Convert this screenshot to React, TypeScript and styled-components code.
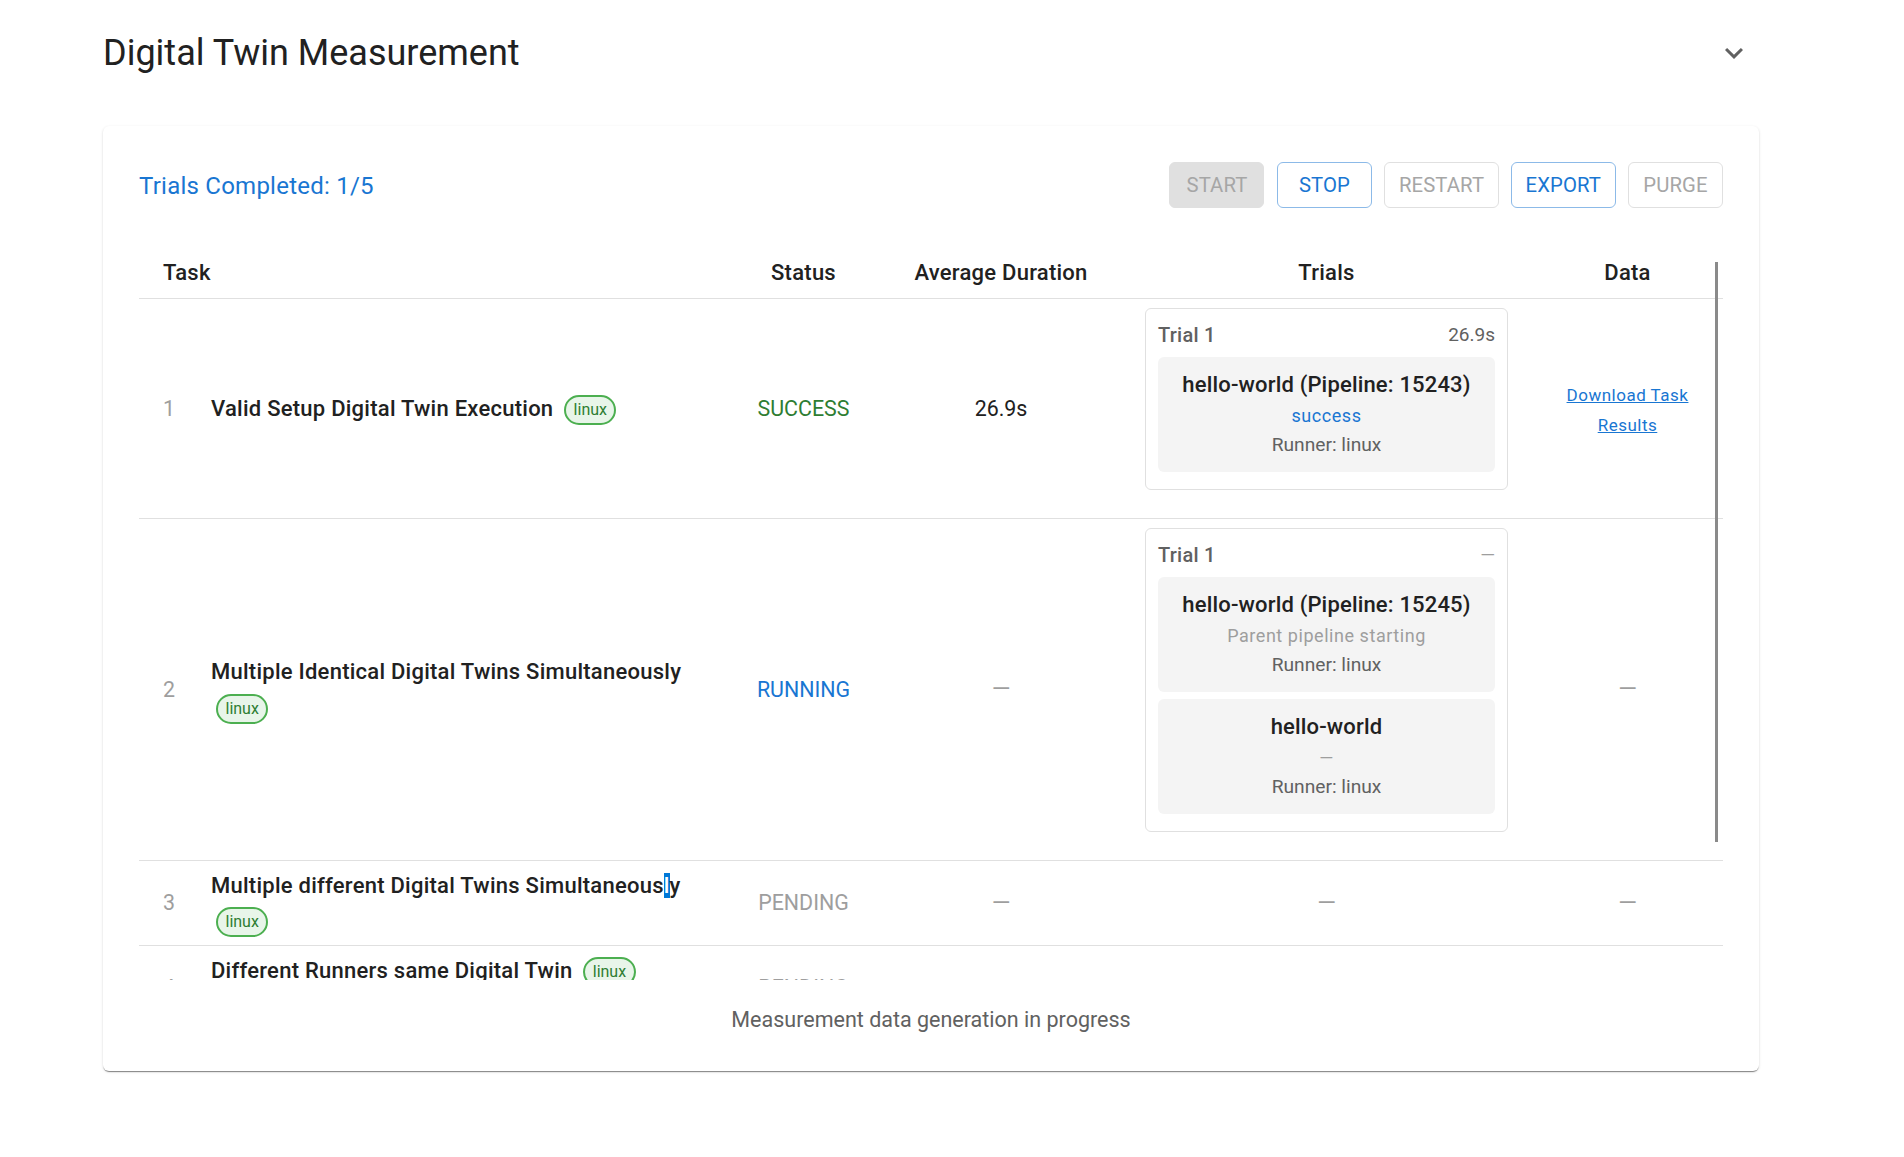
import React from "react";
import styled, { createGlobalStyle } from "styled-components";

const GlobalStyle = createGlobalStyle`
  html, body {
    margin: 0;
    padding: 0;
    background: #fff;
    font-family: Roboto, "Liberation Sans", sans-serif;
    color: rgba(0, 0, 0, 0.87);
  }
`;

const Page = styled.div`
  width: 1656px;
  padding: 33px 0 86px 103px;
`;

const Header = styled.div`
  display: flex;
  align-items: center;
  justify-content: space-between;
  height: 40px;
  padding-right: 7px;
  margin-bottom: 53px;
`;

const Title = styled.h2`
  margin: 0;
  font-size: 36px;
  font-weight: 400;
  line-height: 40px;
  color: #212121;
`;

const Chevron = styled.svg`
  width: 36px;
  height: 36px;
  fill: #616161;
`;

const Card = styled.div`
  background: #fff;
  border-radius: 6px;
  padding: 36px;
  box-shadow: 0 2px 1px -1px rgba(0, 0, 0, 0.34), 0 1px 1px 0 rgba(0, 0, 0, 0.14),
    0 1px 3px 0 rgba(0, 0, 0, 0.12);
`;

const Toolbar = styled.div`
  display: flex;
  align-items: center;
  justify-content: space-between;
  height: 46px;
  margin-bottom: 38px;
`;

const Completed = styled.div`
  padding-top: 2px;
  font-size: 24px;
  letter-spacing: 0.24px;
  color: #1976d2;
`;

const Buttons = styled.div`
  display: flex;
  gap: 12.5px;
`;

const Button = styled.button<{ $variant: "filled" | "active" | "off" }>`
  height: 46px;
  box-sizing: border-box;
  padding: 0 13.5px;
  min-width: 95px;
  border-radius: 6px;
  font-family: inherit;
  font-size: 20.3px;
  font-weight: 400;
  letter-spacing: 0.1px;
  text-transform: uppercase;
  background: ${(p) => (p.$variant === "filled" ? "#e0e0e0" : "#fff")};
  color: ${(p) => (p.$variant === "active" ? "#1976d2" : "#a6a6a6")};
  border: 1px solid
    ${(p) =>
      p.$variant === "filled"
        ? "#e0e0e0"
        : p.$variant === "active"
        ? "#8cbae8"
        : "#e0e0e0"};
`;

const TableWrap = styled.div`
  position: relative;
  height: 734px;
  overflow: hidden;
  border-radius: 6px;
`;

const Scrollbar = styled.div`
  position: absolute;
  top: 16px;
  right: 5px;
  width: 3px;
  height: 580px;
  background: #8a8a8a;
`;

const Table = styled.table`
  width: 100%;
  table-layout: fixed;
  border-collapse: collapse;
`;

const Th = styled.th<{ $left?: boolean }>`
  height: 52px;
  padding: 1px 24px 0;
  box-sizing: border-box;
  font-size: 22px;
  font-weight: 500;
  letter-spacing: 0.25px;
  color: #212121;
  text-align: ${(p) => (p.$left ? "left" : "center")};
  border-bottom: 1px solid #e0e0e0;
`;

const Tr = styled.tr`
  border-bottom: 1px solid #e0e0e0;
`;

const Td = styled.td`
  padding: 0 24px;
  font-size: 21.4px;
  text-align: center;
  color: #212121;
`;

const TaskCell = styled.div`
  display: flex;
  align-items: center;
`;

const Index = styled.span`
  flex: 0 0 48px;
  text-align: left;
  color: #9e9e9e;
`;

const TaskName = styled.div`
  padding: 7px 0 6px;
  text-align: left;
  font-size: 22px;
  font-weight: 500;
  letter-spacing: 0.25px;
  line-height: 35.5px;
  color: #212121;
`;

const Chip = styled.span`
  display: inline-flex;
  align-items: center;
  box-sizing: border-box;
  height: 30px;
  padding: 0 7.5px;
  margin-left: 5px;
  border: 2px solid #4caf50;
  border-radius: 15px;
  background: #e8f5e9;
  color: #2e7d32;
  font-size: 16px;
  font-weight: 400;
  letter-spacing: 0;
  vertical-align: middle;
`;

const Caret = styled.span`
  background: #0078d7;
  color: #fff;
`;

const Status = styled.span<{ $color: string }>`
  color: ${(p) => p.$color};
`;

const Dash = styled.span`
  font-size: 24px;
  color: #9e9e9e;
`;

const TrialCard = styled.div`
  box-sizing: border-box;
  margin: 9px 0 28px;
  padding: 12px 12px 10px;
  border: 1px solid #e0e0e0;
  border-radius: 6px;
  background: #fff;
`;

const TrialHead = styled.div`
  display: flex;
  align-items: center;
  justify-content: space-between;
  height: 28px;
  margin-bottom: 8px;
  font-size: 19px;
  color: #616161;
`;

const TrialName = styled.span`
  font-size: 20px;
  font-weight: 500;
  letter-spacing: 0.25px;
`;

const TrialTime = styled.span<{ $muted?: boolean }>`
  color: ${(p) => (p.$muted ? "#9e9e9e" : "#616161")};
`;

const Job = styled.div`
  box-sizing: border-box;
  height: 115px;
  margin-bottom: 7px;
  padding-top: 10px;
  border-radius: 6px;
  background: #f4f4f4;
`;

const JobName = styled.div`
  font-size: 22px;
  font-weight: 500;
  letter-spacing: 0.17px;
  line-height: 35px;
  color: #212121;
`;

const JobState = styled.div<{ $color: string }>`
  font-size: 18px;
  letter-spacing: 0.55px;
  line-height: 28px;
  color: ${(p) => p.$color};
`;

const JobRunner = styled.div`
  font-size: 19.2px;
  line-height: 30px;
  color: #616161;
`;

const Download = styled.a`
  display: block;
  padding-top: 4px;
  font-size: 17px;
  letter-spacing: 0.5px;
  line-height: 30px;
  color: #1976d2;
  text-decoration: underline;
`;

const Footer = styled.div`
  margin-top: 25px;
  text-align: center;
  font-size: 21.5px;
  line-height: 30px;
  color: #616161;
`;

const chevronPath = "M16.59 8.59 12 13.17 7.41 8.59 6 10l6 6 6-6z";

const JobBox = ({ name, state, color }: { name: string; state: string; color: string }) => (
  <Job>
    <JobName>{name}</JobName>
    <JobState $color={color}>{state}</JobState>
    <JobRunner>Runner: linux</JobRunner>
  </Job>
);

const App: React.FC = () => {
  return (
    <Page>
      <GlobalStyle />
      <Header>
        <Title>Digital Twin Measurement</Title>
        <Chevron viewBox="0 0 24 24">
          <path d={chevronPath} />
        </Chevron>
      </Header>
      <Card>
        <Toolbar>
          <Completed>Trials Completed: 1/5</Completed>
          <Buttons>
            <Button $variant="filled">Start</Button>
            <Button $variant="active">Stop</Button>
            <Button $variant="off">Restart</Button>
            <Button $variant="active">Export</Button>
            <Button $variant="off">Purge</Button>
          </Buttons>
        </Toolbar>
        <TableWrap>
          <Table>
            <colgroup>
              <col width={587} />
              <col width={155} />
              <col width={240} />
              <col width={411} />
              <col width={191} />
            </colgroup>
            <thead>
              <tr>
                <Th $left>Task</Th>
                <Th>Status</Th>
                <Th>Average Duration</Th>
                <Th>Trials</Th>
                <Th>Data</Th>
              </tr>
            </thead>
            <tbody>
              <Tr>
                <Td>
                  <TaskCell>
                    <Index>1</Index>
                    <TaskName>
                      Valid Setup Digital Twin Execution <Chip>linux</Chip>
                    </TaskName>
                  </TaskCell>
                </Td>
                <Td>
                  <Status $color="#2e7d32">SUCCESS</Status>
                </Td>
                <Td>26.9s</Td>
                <Td>
                  <TrialCard>
                    <TrialHead>
                      <TrialName>Trial 1</TrialName>
                      <TrialTime>26.9s</TrialTime>
                    </TrialHead>
                    <JobBox name="hello-world (Pipeline: 15243)" state="success" color="#1976d2" />
                  </TrialCard>
                </Td>
                <Td>
                  <Download href="#">Download Task Results</Download>
                </Td>
              </Tr>
              <Tr>
                <Td>
                  <TaskCell>
                    <Index>2</Index>
                    <TaskName>
                      Multiple Identical Digital Twins Simultaneously <Chip>linux</Chip>
                    </TaskName>
                  </TaskCell>
                </Td>
                <Td>
                  <Status $color="#1976d2">RUNNING</Status>
                </Td>
                <Td>
                  <Dash>—</Dash>
                </Td>
                <Td>
                  <TrialCard>
                    <TrialHead>
                      <TrialName>Trial 1</TrialName>
                      <TrialTime $muted>—</TrialTime>
                    </TrialHead>
                    <JobBox name="hello-world (Pipeline: 15245)" state="Parent pipeline starting" color="#9e9e9e" />
                    <JobBox name="hello-world" state="—" color="#9e9e9e" />
                  </TrialCard>
                </Td>
                <Td>
                  <Dash>—</Dash>
                </Td>
              </Tr>
              <Tr>
                <Td>
                  <TaskCell>
                    <Index>3</Index>
                    <TaskName>
                      Multiple different Digital Twins Simultaneous<Caret>l</Caret>y <Chip>linux</Chip>
                    </TaskName>
                  </TaskCell>
                </Td>
                <Td>
                  <Status $color="#9e9e9e">PENDING</Status>
                </Td>
                <Td>
                  <Dash>—</Dash>
                </Td>
                <Td>
                  <Dash>—</Dash>
                </Td>
                <Td>
                  <Dash>—</Dash>
                </Td>
              </Tr>
              <Tr>
                <Td>
                  <TaskCell>
                    <Index>4</Index>
                    <TaskName>
                      Different Runners same Digital Twin <Chip>linux</Chip> <Chip>windows</Chip>
                    </TaskName>
                  </TaskCell>
                </Td>
                <Td>
                  <Status $color="#9e9e9e">PENDING</Status>
                </Td>
                <Td>
                  <Dash>—</Dash>
                </Td>
                <Td>
                  <Dash>—</Dash>
                </Td>
                <Td>
                  <Dash>—</Dash>
                </Td>
              </Tr>
            </tbody>
          </Table>
          <Scrollbar />
        </TableWrap>
        <Footer>Measurement data generation in progress</Footer>
      </Card>
    </Page>
  );
};

export default App;
